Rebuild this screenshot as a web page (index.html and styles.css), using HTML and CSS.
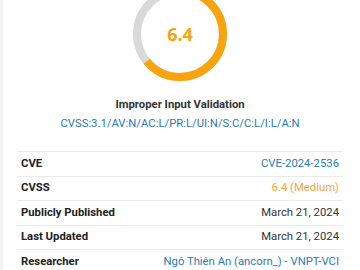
FILE: index.html
```html
<!DOCTYPE html>
<html>
<head>
<meta charset="utf-8">
<link rel="stylesheet" href="styles.css">
</head>
<body>
<div class="page">
  <div class="gauge">
    <svg class="ring" width="96" height="96" viewBox="0 0 96 96">
      <circle cx="48" cy="48" r="43" fill="none" stroke="#d9d9d9" stroke-width="8"/>
      <circle cx="48" cy="48" r="43" fill="none" stroke="#f9a30e" stroke-width="8" stroke-dasharray="172.9 300" transform="rotate(-90 48 48)"/>
    </svg>
    <div class="score">6.4</div>
  </div>
  <div class="title">Improper Input Validation</div>
  <div class="vector">CVSS:3.1/AV:N/AC:L/PR:L/UI:N/S:C/C:L/I:L/A:N</div>
  <table class="info">
    <tr><th>CVE</th><td class="link">CVE-2024-2536</td></tr>
    <tr><th>CVSS</th><td class="orange">6.4 (Medium)</td></tr>
    <tr><th>Publicly Published</th><td>March 21, 2024</td></tr>
    <tr><th>Last Updated</th><td>March 21, 2024</td></tr>
    <tr><th>Researcher</th><td class="link">Ngô Thiên An (ancorn_) - VNPT-VCI</td></tr>
  </table>
</div>
</body>
</html>
```
FILE: styles.css
```css
html, body { margin: 0; padding: 0; background: #fff; }
body {
  font-family: Roboto, "Liberation Sans", sans-serif;
  color: #333;
  box-shadow: inset 3px 0 0 #f3f3f3;
  min-height: 270px;
  overflow: hidden;
}
.page {
  padding: 0 17px;
  display: flex;
  flex-direction: column;
  align-items: center;
}
.gauge {
  display: grid;
  place-items: center;
  margin-top: -14px;
}
.ring, .score { grid-area: 1 / 1; }
.ring { display: block; }
.score {
  font-family: "Open Sans", sans-serif;
  font-weight: 700;
  font-size: 18px;
  color: #f9a30e;
  line-height: 1;
  margin-top: -1px;
}
.title {
  margin-top: 15px;
  font-size: 11.3px;
  font-weight: 700;
  line-height: 16px;
  color: #333;
}
.vector {
  margin-top: 3px;
  font-size: 11.3px;
  line-height: 16px;
  color: #2b7bb5;
}
.info {
  margin-top: 19px;
  width: 100%;
  border-collapse: collapse;
  font-size: 11.3px;
}
.info tr { border-top: 1px solid #eaeaea; }
.info th, .info td {
  height: 23.5px;
  padding: 0 4px;
  line-height: 16px;
  vertical-align: middle;
  white-space: nowrap;
}
.info th { text-align: left; font-weight: 700; color: #222; }
.info td { text-align: right; color: #333; }
.info td.link { color: #2b7bb5; }
.info td.orange { color: #f5a33a; }
```
